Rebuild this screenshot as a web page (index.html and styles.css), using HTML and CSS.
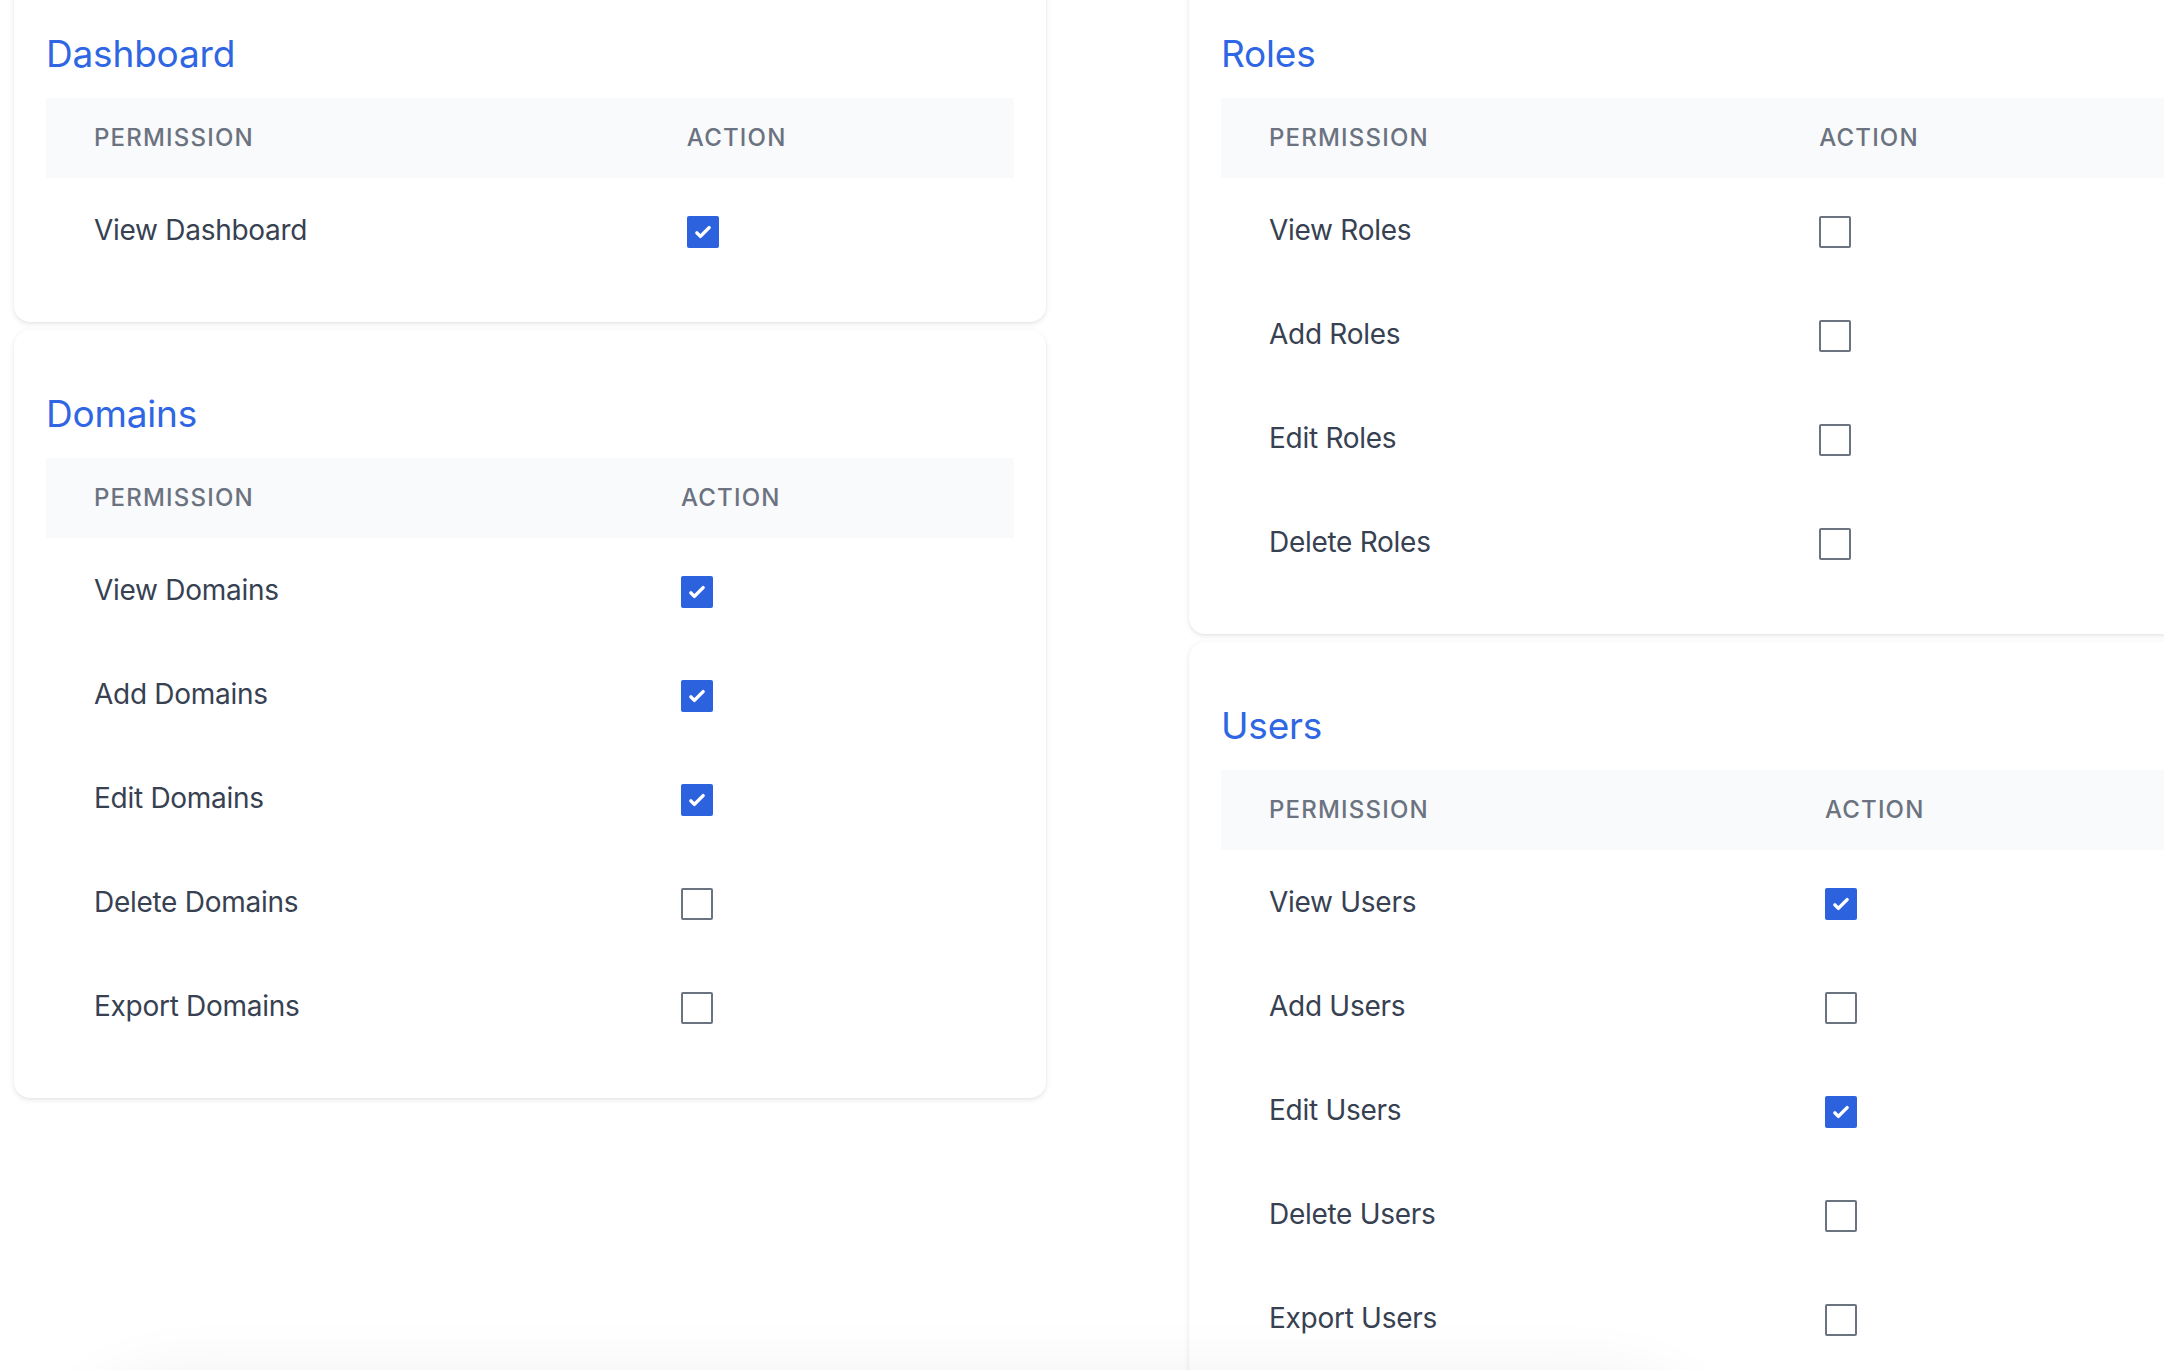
FILE: index.html
```html
<!DOCTYPE html>
<html lang="en">
<head>
<meta charset="utf-8">
<title>Permissions</title>
<link rel="stylesheet" href="styles.css">
</head>
<body>
<div class="page">
  <div class="column column-left">
    <section class="card">
      <h2 class="card-title">Dashboard</h2>
      <table class="perm-table">
        <thead><tr><th>Permission</th><th>Action</th></tr></thead>
        <tbody>
          <tr><td>View Dashboard</td><td><input type="checkbox" class="check" checked></td></tr>
        </tbody>
      </table>
    </section>
    <section class="card">
      <h2 class="card-title">Domains</h2>
      <table class="perm-table">
        <thead><tr><th>Permission</th><th>Action</th></tr></thead>
        <tbody>
          <tr><td>View Domains</td><td><input type="checkbox" class="check" checked></td></tr>
          <tr><td>Add Domains</td><td><input type="checkbox" class="check" checked></td></tr>
          <tr><td>Edit Domains</td><td><input type="checkbox" class="check" checked></td></tr>
          <tr><td>Delete Domains</td><td><input type="checkbox" class="check"></td></tr>
          <tr><td>Export Domains</td><td><input type="checkbox" class="check"></td></tr>
        </tbody>
      </table>
    </section>
  </div>
  <div class="column column-right">
    <section class="card">
      <h2 class="card-title">Roles</h2>
      <table class="perm-table">
        <thead><tr><th>Permission</th><th>Action</th></tr></thead>
        <tbody>
          <tr><td>View Roles</td><td><input type="checkbox" class="check"></td></tr>
          <tr><td>Add Roles</td><td><input type="checkbox" class="check"></td></tr>
          <tr><td>Edit Roles</td><td><input type="checkbox" class="check"></td></tr>
          <tr><td>Delete Roles</td><td><input type="checkbox" class="check"></td></tr>
        </tbody>
      </table>
    </section>
    <section class="card">
      <h2 class="card-title">Users</h2>
      <table class="perm-table">
        <thead><tr><th>Permission</th><th>Action</th></tr></thead>
        <tbody>
          <tr><td>View Users</td><td><input type="checkbox" class="check" checked></td></tr>
          <tr><td>Add Users</td><td><input type="checkbox" class="check"></td></tr>
          <tr><td>Edit Users</td><td><input type="checkbox" class="check" checked></td></tr>
          <tr><td>Delete Users</td><td><input type="checkbox" class="check"></td></tr>
          <tr><td>Export Users</td><td><input type="checkbox" class="check"></td></tr>
        </tbody>
      </table>
    </section>
  </div>
</div>
<div class="bottom-shade"></div>
</body>
</html>
```

FILE: styles.css
```css
* { box-sizing: border-box; }

html, body {
  margin: 0;
  padding: 0;
  background: #ffffff;
  overflow: hidden;
  height: 100%;
}

body {
  font-family: Inter, "Noto Sans", "Liberation Sans", sans-serif;
  color: #374151;
}

.page {
  display: flex;
  align-items: flex-start;
  gap: 143px;
  padding-left: 14px;
  margin-top: -30px;
  width: 2400px;
}

.column {
  display: flex;
  flex-direction: column;
  gap: 8px;
  width: 1032px;
  flex: none;
}

.card {
  background: #ffffff;
  border-radius: 16px;
  box-shadow: 0 2px 6px rgba(0, 0, 0, 0.08), 0 1px 3px rgba(0, 0, 0, 0.05);
  padding: 56px 32px 40px;
}

.card-title {
  margin: 0 0 16px;
  font-size: 37px;
  line-height: 56px;
  font-weight: 400;
  letter-spacing: -0.005em;
  color: #2f66e3;
}

.perm-table {
  width: 100%;
  border-collapse: collapse;
}

.perm-table th {
  background: #f9fafb;
  padding: 24px 48px;
  text-align: left;
  font-size: 24px;
  line-height: 32px;
  font-weight: 500;
  letter-spacing: 0.05em;
  text-transform: uppercase;
  color: #6b7280;
}

.perm-table td {
  padding: 32px 48px;
  font-size: 28px;
  line-height: 40px;
  letter-spacing: -0.01em;
  color: #374151;
  white-space: nowrap;
}

.check {
  -webkit-appearance: none;
  appearance: none;
  display: inline-block;
  vertical-align: middle;
  width: 32px;
  height: 32px;
  margin: 0;
  border: 2px solid #6b7280;
  border-radius: 2px;
  background-color: #ffffff;
  background-position: center;
  background-repeat: no-repeat;
  background-size: 100% 100%;
}

.check:checked {
  border-color: transparent;
  background-color: #2d62df;
  background-image: url("data:image/svg+xml,%3csvg viewBox='0 0 16 16' fill='white' xmlns='http://www.w3.org/2000/svg'%3e%3cpath d='M12.207 4.793a1 1 0 010 1.414l-5 5a1 1 0 01-1.414 0l-2-2a1 1 0 011.414-1.414L6.5 9.086l4.293-4.293a1 1 0 011.414 0z'/%3e%3c/svg%3e");
}

.bottom-shade {
  position: fixed;
  left: 80px;
  width: 1620px;
  top: 1400px;
  height: 200px;
  border-radius: 100px;
  box-shadow: 0 0 70px 20px rgba(0, 0, 0, 0.07);
  background: #ffffff;
}
```
